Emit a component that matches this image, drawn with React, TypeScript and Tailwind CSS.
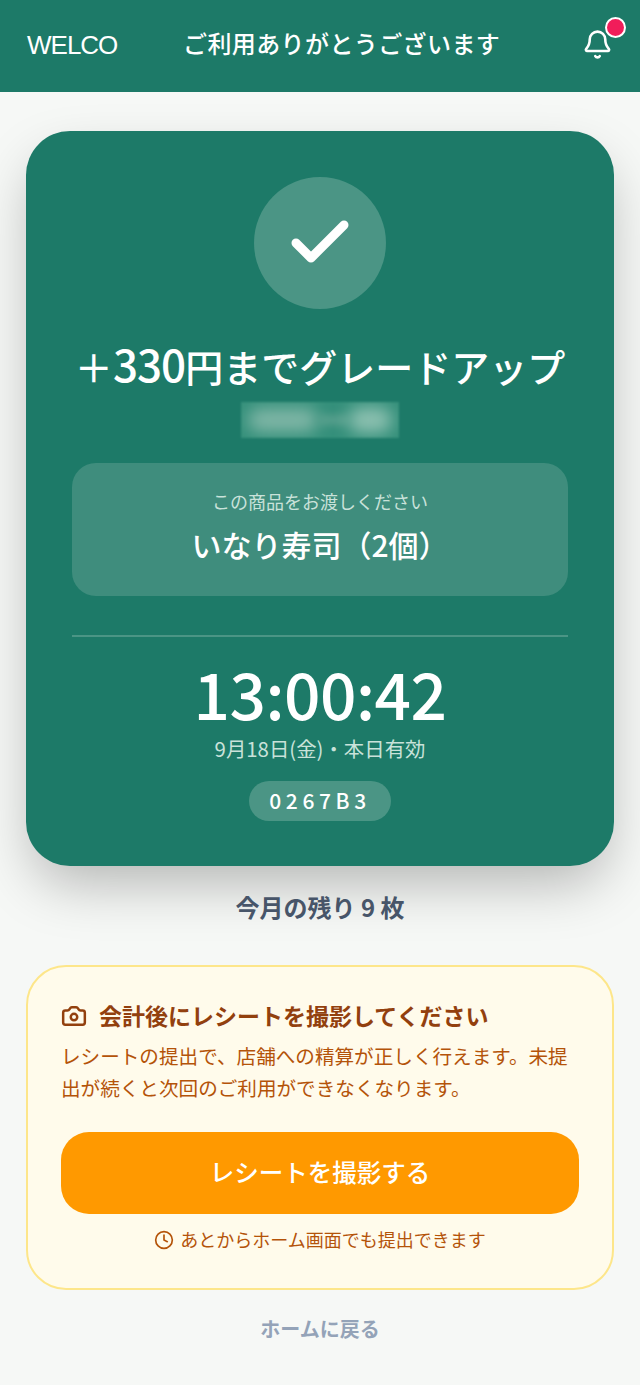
import React from "react";
import { Bell, Camera, Clock, Check } from "lucide-react";

const font = { fontFamily: '"Noto Sans CJK JP", "Noto Sans", sans-serif' };

export default function App() {
  return (
    <div style={font} className="w-[640px] h-[1385px] bg-[#f6f8f6] overflow-hidden flex flex-col">
      <header className="h-[92px] bg-[#1d7a68] px-[26px] flex items-center text-white shrink-0">
        <div className="w-[157px] font-['Liberation_Sans'] text-[26px] leading-none tracking-[-1px] mb-[2px] pl-[1px]">WELCO</div>
        <div className="text-[24px] tracking-[0.4px] leading-none font-medium mb-[6px] whitespace-nowrap">ご利用ありがとうございます</div>
        <div className="relative ml-auto w-[30px] h-[36px] mb-[4px]">
          <Bell size={31} strokeWidth={2} className="text-white absolute left-[-2px] top-[3px]" />
          <div className="absolute left-[21px] top-[-9px] w-[21px] h-[21px] rounded-full bg-[#f11d5a] border-2 border-white" />
        </div>
      </header>

      <main className="flex flex-col px-[26px] pt-[39px]">
        <section className="h-[735px] rounded-[44px] bg-[#1d7a68] shadow-[0_24px_56px_-8px_rgba(0,0,0,0.28)] flex flex-col items-center pt-[46px] px-[46px] text-white">
          <div className="w-[132px] h-[132px] rounded-full bg-[#4b9585] flex items-center justify-center shrink-0">
            <Check size={72} strokeWidth={3} className="text-white" />
          </div>
          <h1 className="mt-[29px] text-[38px] leading-[56px] h-[57px] font-medium whitespace-nowrap">＋<span className="text-[44px] leading-none tracking-[-1px]">330</span>円までグレードアップ</h1>
          <div className="mt-[7px] w-[158px] h-[36px] overflow-hidden bg-[#35907b] blur-[1px] flex items-center justify-center shrink-0">
            <div className="w-[70px] h-[24px] rounded-full bg-[#7fb6a6] blur-[8px]" />
            <div className="w-[30px] h-[8px] bg-[#5fa391] blur-[4px]" />
            <div className="w-[44px] h-[26px] rounded-full bg-[#8cc0b0] blur-[8px]" />
          </div>
          <div className="mt-[25px] w-full h-[133px] rounded-[24px] bg-[#3f8d7d] flex flex-col items-center pt-[25px] shrink-0">
            <div className="text-[18px] leading-[26px] text-[#c9e2da]">この商品をお渡しください</div>
            <div className="mt-[8px] text-[30px] leading-[44px] font-medium whitespace-nowrap">いなり寿司（2個）</div>
          </div>
          <div className="mt-[39px] w-full h-[2px] bg-[#4b9585] shrink-0" />
          <div className="mt-[23px] text-[64px] leading-[64px] font-medium tracking-[-0.5px]">13:00:42</div>
          <div className="mt-[10px] text-[20.4px] leading-[28px] text-[#c9e2da]">9月18日(金)・本日有効</div>
          <div className="mt-[19px] w-[142px] h-[40px] rounded-full bg-[#4b9585] flex items-center justify-center text-[21px] leading-none font-medium tracking-[4.6px] pb-[1px]">0267B3</div>
        </section>

        <p className="mt-[26px] text-center text-[24px] leading-[30px] font-bold text-[#475569] whitespace-pre">今月の残り 9 枚</p>

        <section className="mt-[43px] h-[325px] rounded-[40px] border-2 border-[#fde68a] bg-[#fffbeb] px-[33px] pt-[33px]">
          <div className="flex items-center gap-[12px] h-[34px]">
            <Camera size={26} strokeWidth={2.3} className="text-[#92400e] -mt-[2px]" />
            <span className="text-[23px] leading-[34px] font-bold text-[#92400e] -mt-[5px]">会計後にレシートを撮影してください</span>
          </div>
          <p className="mt-[6px] text-[19.6px] leading-[32px] text-[#b45309]">レシートの提出で、店舗への精算が正しく行えます。未提出が続くと次回のご利用ができなくなります。</p>
          <div className="mt-[28px] h-[82px] rounded-[28px] bg-[#ff9900] flex items-center justify-center text-white text-[24.5px] font-medium pb-[2px]">レシートを撮影する</div>
          <div className="mt-[12px] flex items-center justify-center gap-[6px]">
            <Clock size={20} strokeWidth={2} className="text-[#b45309] mt-[1px]" />
            <span className="text-[18px] leading-[26px] text-[#b45309]">あとからホーム画面でも提出できます</span>
          </div>
        </section>

        <p className="mt-[25px] text-center text-[20px] leading-[28px] font-bold text-[#94a3b8]">ホームに戻る</p>
      </main>
    </div>
  );
}
